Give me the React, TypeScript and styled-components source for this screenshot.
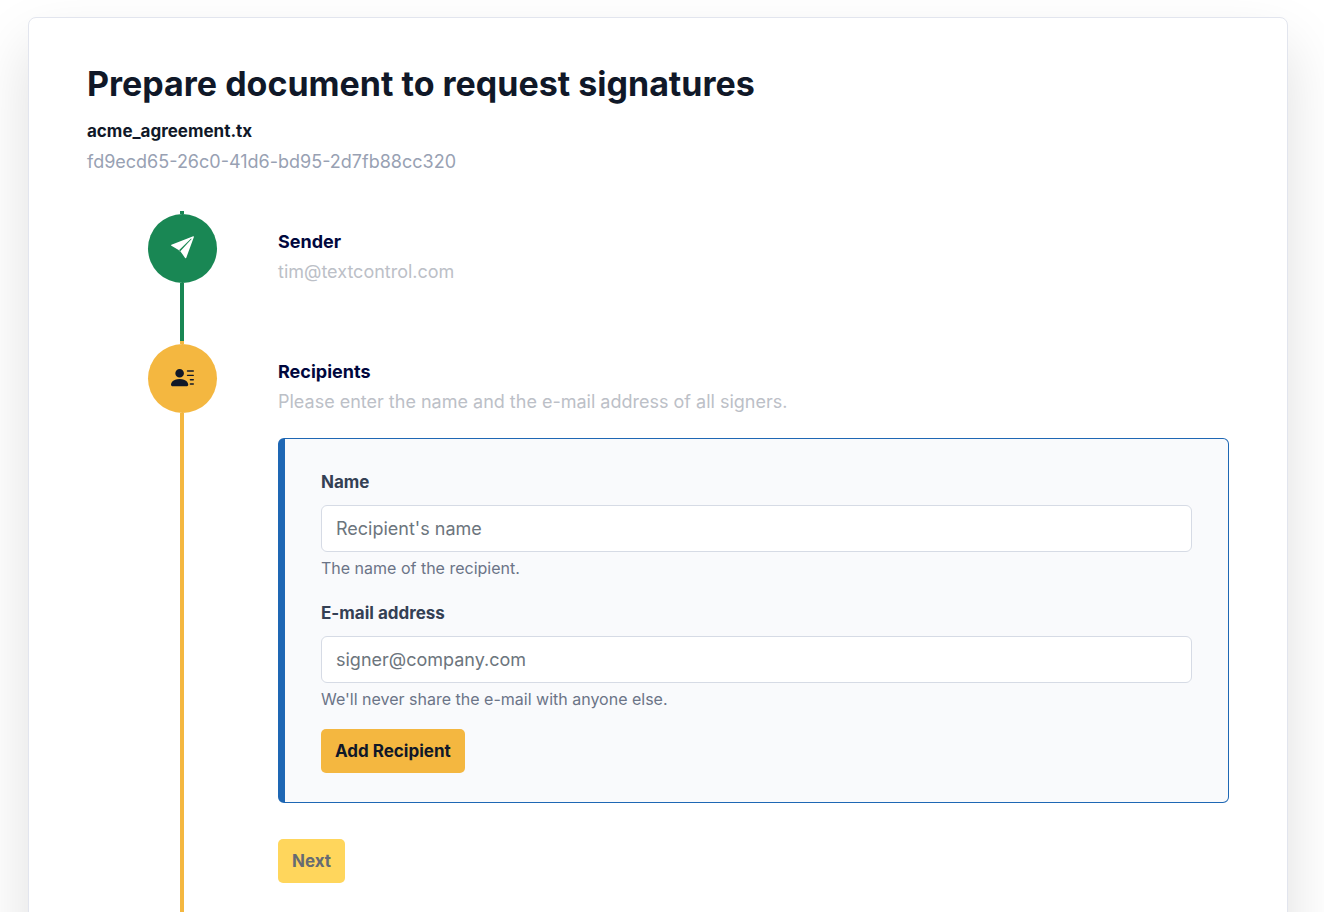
import { useState } from "react";
import type { FormEvent, ReactNode } from "react";
import styled, { createGlobalStyle } from "styled-components";
import { BsPersonLinesFill } from "react-icons/bs";

const GlobalStyle = createGlobalStyle`
  *, *::before, *::after { box-sizing: border-box; }
  body {
    margin: 0;
    background: #ffffff;
    color: #101828;
    font-family: Inter, "Liberation Sans", sans-serif;
    font-size: 18px;
    line-height: 30px;
  }
`;

const Page = styled.main`
  display: flex;
  min-height: 100vh;
  padding: 17px 36px 0 28px;
  overflow: hidden;
`;

const Card = styled.section`
  flex: 1;
  min-width: 0;
  display: flex;
  flex-direction: column;
  margin-bottom: -80px;
  padding: 44px 58px 0;
  background: #ffffff;
  border: 1px solid #e2e5ee;
  border-radius: 8px;
  box-shadow: 0 28px 60px rgba(0, 0, 0, 0.13);
`;

const Header = styled.header`
  margin-bottom: 34px;
`;

const Title = styled.h1`
  margin: 0 0 10px;
  font-size: 34px;
  line-height: 44px;
  font-weight: 700;
`;

const FileName = styled.p`
  margin: 0 0 1px;
  font-size: 17px;
  font-weight: 700;
`;

const DocumentId = styled.p`
  margin: 0;
  color: #98a1b3;
`;

const Timeline = styled.ol`
  flex: 1;
  display: flex;
  flex-direction: column;
  margin: 0;
  padding: 0;
  list-style: none;
`;

const StepItem = styled.li<{ $last?: boolean }>`
  display: grid;
  grid-template-columns: 190px minmax(0, 1fr);
  column-gap: 1px;
  min-height: 130px;
  flex: ${({ $last }) => ($last ? "1" : "none")};
`;

const Rail = styled.div<{ $tone: string }>`
  display: flex;
  flex-direction: column;
  align-items: center;
  color: ${({ $tone }) => $tone};

  &::before {
    content: "";
    width: 4px;
    height: 3px;
    background: currentColor;
  }

  &::after {
    content: "";
    flex: 1;
    width: 4px;
    background: currentColor;
  }
`;

const Marker = styled.span<{ $ink: string }>`
  display: flex;
  align-items: center;
  justify-content: center;
  width: 69px;
  height: 69px;
  padding-bottom: 2px;
  border-radius: 50%;
  background: currentColor;

  svg {
    color: ${({ $ink }) => $ink};
  }
`;

const StepBody = styled.div`
  padding-top: 16px;
`;

const StepTitle = styled.h2`
  margin: 0;
  color: #00073d;
  font-size: 18px;
  line-height: 30px;
  font-weight: 700;
`;

const StepText = styled.p`
  margin: 0;
  color: #bcc0c7;
`;

const RecipientForm = styled.form`
  margin: 21px 0 36px;
  padding: 28px 36px 29px;
  background: #f9fafc;
  border: 1px solid #1e67b4;
  border-left-width: 7px;
  border-radius: 6px;
`;

const Field = styled.div`
  display: flex;
  flex-direction: column;
  margin-bottom: 18px;
`;

const Label = styled.label`
  margin-bottom: 8px;
  color: #344054;
  font-size: 17px;
  font-weight: 700;
`;

const Input = styled.input`
  width: 100%;
  height: 47px;
  padding: 0 14px;
  background: #ffffff;
  border: 1px solid #d6dbe5;
  border-radius: 6px;
  color: #101828;
  font: inherit;

  &::placeholder {
    color: #6c757d;
    opacity: 1;
  }
`;

const Hint = styled.small`
  margin-top: 4px;
  color: #6b7487;
  font-size: 16px;
  line-height: 24px;
`;

const Button = styled.button`
  display: block;
  height: 44px;
  padding: 0 14px;
  border: 0;
  border-radius: 5px;
  background: #f4b740;
  color: #101828;
  font-family: inherit;
  font-size: 17px;
  font-weight: 700;
  cursor: pointer;

  &:disabled {
    background: #ffd65c;
    color: #666b72;
    cursor: default;
  }
`;

function PaperPlaneIcon() {
  return (
    <svg width="23" height="23" viewBox="0 0 23 23" fill="currentColor">
      <path d="M22.2.3a.6.6 0 0 1 .7.8l-7.6 20.6a.7.7 0 0 1-1.2.2L9.3 15.2 20.6 3.1 20.1 2.6 8 14.2.4 9.8a.6.6 0 0 1 0-1.1z" />
      <path d="M8 14.2l1.3 1-.3.4-1.3-1z" />
    </svg>
  );
}

type StepProps = {
  title: string;
  text: string;
  icon: ReactNode;
  tone: string;
  ink: string;
  last?: boolean;
  children?: ReactNode;
};

function Step({ title, text, icon, tone, ink, last, children }: StepProps) {
  return (
    <StepItem $last={last}>
      <Rail $tone={tone} aria-hidden="true">
        <Marker $ink={ink}>{icon}</Marker>
      </Rail>
      <StepBody>
        <StepTitle>{title}</StepTitle>
        <StepText>{text}</StepText>
        {children}
      </StepBody>
    </StepItem>
  );
}

export default function App() {
  const [name, setName] = useState("");
  const [email, setEmail] = useState("");
  const [count, setCount] = useState(0);

  const addRecipient = (event: FormEvent) => {
    event.preventDefault();
    if (!name || !email) return;
    setCount(count + 1);
    setName("");
    setEmail("");
  };

  return (
    <>
      <GlobalStyle />
      <Page>
        <Card>
          <Header>
            <Title>Prepare document to request signatures</Title>
            <FileName>acme_agreement.tx</FileName>
            <DocumentId>fd9ecd65-26c0-41d6-bd95-2d7fb88cc320</DocumentId>
          </Header>
          <Timeline>
            <Step
              title="Sender"
              text="tim@textcontrol.com"
              icon={<PaperPlaneIcon />}
              tone="#198754"
              ink="#ffffff"
            />
            <Step
              title="Recipients"
              text="Please enter the name and the e-mail address of all signers."
              icon={<BsPersonLinesFill size={23} />}
              tone="#f4b740"
              ink="#101828"
              last
            >
              <RecipientForm onSubmit={addRecipient}>
                <Field>
                  <Label htmlFor="recipient-name">Name</Label>
                  <Input
                    id="recipient-name"
                    type="text"
                    placeholder="Recipient's name"
                    value={name}
                    onChange={(event) => setName(event.target.value)}
                  />
                  <Hint>The name of the recipient.</Hint>
                </Field>
                <Field>
                  <Label htmlFor="recipient-email">E-mail address</Label>
                  <Input
                    id="recipient-email"
                    type="email"
                    placeholder="signer@company.com"
                    value={email}
                    onChange={(event) => setEmail(event.target.value)}
                  />
                  <Hint>We'll never share the e-mail with anyone else.</Hint>
                </Field>
                <Button type="submit">Add Recipient</Button>
              </RecipientForm>
              <Button type="button" disabled={count === 0}>
                Next
              </Button>
            </Step>
          </Timeline>
        </Card>
      </Page>
    </>
  );
}
